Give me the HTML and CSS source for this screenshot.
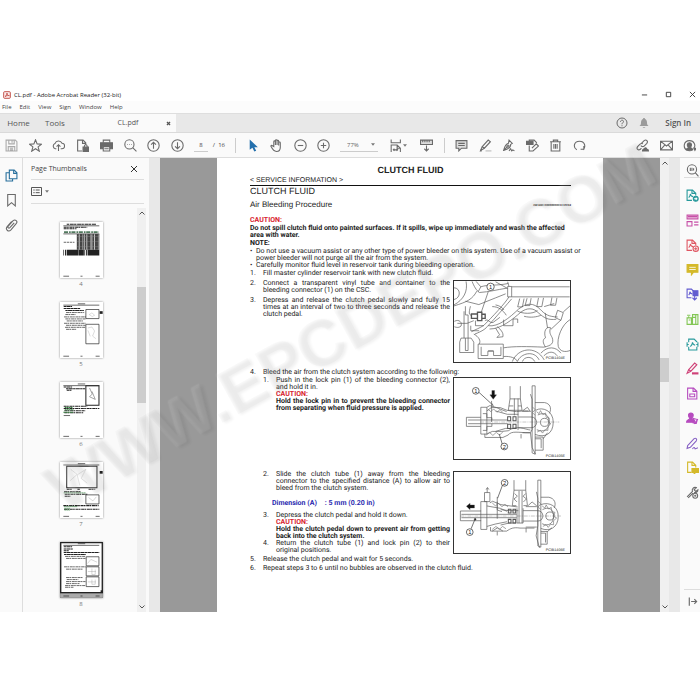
FILE: index.html
```html
<!DOCTYPE html>
<html lang="en">
<head>
<meta charset="utf-8">
<title>CL.pdf - Adobe Acrobat Reader (32-bit)</title>
<link rel="stylesheet" href="styles.css">
</head>
<body>
<div class="window">
  <header class="titlebar">
    <svg class="app-icon" viewBox="0 0 24 24"><rect x="2" y="2" width="20" height="20" rx="3" fill="#fbeaea" stroke="#b8372f" stroke-width="2.5"/><path d="M6 17c3-2 6-7 6-11 0 5 3 8 7 8-4-1-9 0-13 3z" fill="none" stroke="#b8372f" stroke-width="2"/></svg>
    <span class="title">CL.pdf - Adobe Acrobat Reader (32-bit)</span>
    <div class="window-controls">
      <button aria-label="Minimize"><svg viewBox="0 0 8 8"><path d="M1 4.500h6"/></svg></button>
      <button aria-label="Maximize"><svg viewBox="0 0 8 8"><path d="M1.500 1.500h5v5h-5z"/></svg></button>
      <button aria-label="Close"><svg viewBox="0 0 8 8"><path d="M1 1l6 6M7 1l-6 6"/></svg></button>
    </div>
  </header>
  <nav class="menubar">
    <button>File</button><button>Edit</button><button>View</button><button>Sign</button><button>Window</button><button>Help</button>
  </nav>
  <div class="tabs">
    <button class="tab home">Home</button>
    <button class="tab tools">Tools</button>
    <div class="tab-active"><span>CL.pdf</span><button aria-label="Close tab"><svg viewBox="0 0 8 8"><path d="M1.500 1.500l5 5M6.500 1.500l-5 5"/></svg></button></div>
    <div class="account">
      <button aria-label="Help"><svg class="icon" viewBox="0 0 24 24"><circle cx="12" cy="12" r="10"/><path d="M9 9.500c0-4 6-4 6-.5 0 2.500-3 2.500-3 5.500M12 16.500v2"/></svg></button>
      <button aria-label="Notifications"><svg class="icon bell" viewBox="0 0 24 24"><path d="M12 2c1.500 0 2 1 2 2 3 1 4 4 4 7 0 4 1 5 3 7H3c2-2 3-3 3-7 0-3 1-6 4-7 0-1 .5-2 2-2zM9 20h6l-3 2z"/></svg></button>
      <button class="signin">Sign In</button>
    </div>
  </div>
  <div class="toolbar">
    <div class="group file-tools">
      <button aria-label="Save" class="dim"><svg class="icon" viewBox="0 0 24 24"><path d="M2 2h17l3 3v17H2zM7 2v7h10V2M13 3v4M6 22v-8h12v8M9 17h6M9 20h6"/></svg></button>
      <button aria-label="Star"><svg class="icon" viewBox="0 0 24 24"><path d="M12 1.500l3 7.500 8 .5-6.200 5 2.200 8L12 18l-7 4.500 2.200-8L1 9.500 9 9z"/></svg></button>
      <button aria-label="Upload"><svg class="icon" viewBox="0 0 24 24"><path d="M8 18H6a5 5 0 0 1-.5-9.500 7 7 0 0 1 13-.5A5 5 0 0 1 18 18h-2M12 22V11M8.500 14l3.500-3.500 3.500 3.500"/></svg></button>
      <button aria-label="Protect"><svg class="icon" viewBox="0 0 24 24"><path d="M11 22H3V2h10l5 5v4M12 2v6h6"/><path class="solid" d="M13 15h10v8H13z"/><path d="M15.500 15v-2a2.500 2.500 0 0 1 5 0v2"/></svg></button>
      <button aria-label="Print"><svg class="icon" viewBox="0 0 24 24"><path d="M6 7V2h12v5"/><path class="solid" d="M1 7h22v11h-4v-5H5v5H1z"/><path d="M6 14h12v8H6zM8 18h8"/></svg></button>
      <button aria-label="Find"><svg class="icon" viewBox="0 0 24 24"><circle cx="10" cy="10" r="8.500"/><path d="M16 16l7 7M6 10h1M9.500 10h1M13 10h1"/></svg></button>
      <button aria-label="Previous page"><svg class="icon" viewBox="0 0 24 24"><circle cx="12" cy="12" r="10.500"/><path d="M12 18V6M7.500 10.500L12 6l4.500 4.500"/></svg></button>
      <button aria-label="Next page"><svg class="icon" viewBox="0 0 24 24"><circle cx="12" cy="12" r="10.500"/><path d="M12 6v12M7.500 13.500L12 18l4.500-4.500"/></svg></button>
    </div>
    <div class="group pager"><input aria-label="Page number" value="8"><span>/&nbsp; 16</span></div>
    <div class="group view-tools">
      <button aria-label="Select"><svg class="icon" viewBox="0 0 24 24"><path d="M5 1v19l5-4 3.500 7 3.500-1.500L13.500 15H20z" fill="#2470ad" stroke="none"/></svg></button>
      <button aria-label="Pan"><svg class="icon" viewBox="0 0 24 24"><path d="M7 14V5c0-2 3-2 3 0v6-8c0-2 3-2 3 0v8-7c0-2 3-2 3 0v8-5c0-2 3-2 3 0v8c0 5-3 8-7 8-5 0-7-3-10-9-1-2 1-3 2.500-1.500z"/></svg></button>
      <button aria-label="Zoom out"><svg class="icon" viewBox="0 0 24 24"><circle cx="12" cy="12" r="10.500"/><path d="M7 12h10"/></svg></button>
      <button aria-label="Zoom in"><svg class="icon" viewBox="0 0 24 24"><circle cx="12" cy="12" r="10.500"/><path d="M7 12h10M12 7v10"/></svg></button>
    </div>
    <div class="group zoom"><select aria-label="Zoom level"><option>77%</option></select><svg class="caret" viewBox="0 0 6 4"><path d="M0 0h6L3 4z"/></svg></div>
    <div class="group fit">
      <button aria-label="Fit page" class="wide"><svg class="icon" viewBox="0 0 24 24"><path d="M4 1v6h17V1M4 24V11h11l6 6v7M15 11v6h6M8 20h8M10 18l-2 2 2 2M14 18l2 2-2 2"/></svg><svg class="caret" viewBox="0 0 6 4"><path d="M0 0h6L3 4z"/></svg></button>
      <button aria-label="Scroll mode"><svg class="icon" viewBox="0 0 24 24"><path d="M1 2h22v8H1z" fill="#ddd"/><path d="M5 2v4M9 2v4M13 2v4M17 2v4M12 12v10M8 18l4 4 4-4"/></svg></button>
    </div>
    <div class="group edit-tools">
      <button aria-label="Comment"><svg class="icon" viewBox="0 0 24 24"><path d="M2 3h20v14H12l-5 5v-5H2z" fill="#ddd"/><path d="M6 8h12M6 12h12"/></svg></button>
      <button aria-label="Highlight"><svg class="icon" viewBox="0 0 24 24"><path d="M6 14L17 2l4 3-11 12zM6 14l-3 7 7-4M2 22h3"/><path d="M12 22h11" stroke="#bbb"/></svg></button>
      <button aria-label="Sign"><svg class="icon" viewBox="0 0 24 24"><path d="M13 2l6 6-3 2c0 6-5 9-13 11 2-8 4-12 9-13zM3 21l7-7"/><circle cx="11" cy="13" r="2"/><path d="M13 22l3-4 2 4 2-2 3 2"/></svg></button>
      <button aria-label="Edit"><svg class="icon" viewBox="0 0 24 24"><path d="M6 12v10h7l10-9-4-4-8 8M6 5V2h9l5 5"/><path class="solid" d="M1 4h12v6H1z"/></svg></button>
      <button aria-label="Delete"><svg class="icon" viewBox="0 0 24 24"><path d="M2 5h20M8 5V2h8v3M4 5v17h16V5M9 9v9M12 9v9M15 9v9"/></svg></button>
      <button aria-label="Rotate"><svg class="icon" viewBox="0 0 24 24"><path d="M7 20C0 16 1 4 12 4c10 0 12 10 7 16M14 19h6v-6"/></svg></button>
    </div>
    <div class="group share-tools">
      <button aria-label="Share link"><svg class="icon" viewBox="0 0 24 24"><path d="M10 8l5-5c4-3 8 1 5 5l-5 5c-2 2-5 1-6-1M13 9c-2-1-4-1-6 1l-4 4c-3 4 1 8 5 5l2-2"/><path class="solid" d="M12 22c0-4 3-3 4-5 3-2 4 1 4 2 3 0 3 1 3 3z"/></svg></button>
      <button aria-label="Mail"><svg class="icon" viewBox="0 0 24 24"><path d="M1 4h22v16H1zM1 4l11 9L23 4M1 20l8-9M23 20l-8-9"/></svg></button>
      <button aria-label="Account"><svg class="icon" viewBox="0 0 24 24"><path d="M8 21C-1 17 1 3 12 3c9 0 12 9 8 14" /><path class="solid" d="M12 7c5 0 4 6 2 8 0 2 4 2 4 5-3 2-8 2-12 0 0-3 4-3 4-5-3-2-3-8 2-8zM20 17h4l-2 4z"/></svg></button>
    </div>
  </div>

  <main class="workspace">
    <nav class="rail">
      <button aria-label="Page thumbnails"><svg class="icon blue" viewBox="0 0 24 24"><path d="M8 2h9l5 5v11H8zM16 2v6h6M8 7H2v15h12v-4"/></svg></button>
      <button aria-label="Bookmarks"><svg class="icon" viewBox="0 0 24 24"><path d="M5 1h14v21l-7-6-7 6z"/></svg></button>
      <button aria-label="Attachments"><svg class="icon" viewBox="0 0 24 24"><path d="M17 7l-8 9c-2 2-5 0-3-3l9-10c4-3 9 1 6 5L11 20c-5 5-11-1-7-6l8-9"/></svg></button>
    </nav>
    <aside class="panel">
      <div class="panel-head"><h2>Page Thumbnails</h2><button aria-label="Close panel"><svg viewBox="0 0 8 8"><path d="M1 1l6 6M7 1l-6 6"/></svg></button></div>
      <div class="panel-options"><button aria-label="Options"><svg class="list" viewBox="0 0 33 27"><path d="M1.500 1.500h30v24h-30zM7 9h4M14 9h12M7 17h4M14 17h12"/></svg><svg class="caret" viewBox="0 0 6 4"><path d="M0 0h6L3 4z"/></svg></button></div>
      <div class="panel-body">
        <div class="thumbs">
          <button class="thumb"><svg viewBox="180 197 128 166"><g stroke="#222" fill="none"><path d="M200 203h88" stroke-width="3" stroke-dasharray="7 2 12 1"/><path d="M190 208h107M190 232h107" stroke-width="2"/><path d="M191 212h70M191 217h38" stroke-width="3" stroke-dasharray="9 1 5 2"/><path d="M192 227h104" stroke="#527a5f" stroke-width="5" stroke-dasharray="12 3 5 2"/><path d="M191 257h32" stroke-width="2" stroke-dasharray="7 2"/><path d="M230 256h67" stroke-width="47" stroke="#444" stroke-dasharray="6 2 9 1 3 2"/><path d="M230 240h67M230 255h67M230 270h67" stroke="#999" stroke-width="1"/><path d="M190 288h107" stroke-width="17" stroke-dasharray="2 3 3 2 28 0 7 1 15 1"/><path d="M190 358h17M241 358h6M286 358h12" stroke-width="2"/></g></svg><span>4</span></button>
          <button class="thumb"><svg viewBox="180 438 128 166"><g stroke="#222" fill="none"><path d="M233 443h22M190 447h107" stroke-width="2"/><path d="M191 451h25M191 457h50M196 463h55" stroke-width="3" stroke-dasharray="7 1 12 1"/><path d="M198 469h54M196 475h30M192 482h65M196 488h60M200 494h48M192 501h64M198 507h58M195 513h60M198 519h30" stroke-width="2" stroke-dasharray="9 1 5 2"/><path d="M257 460h39v27h-39zM257 504h39v58h-39z" stroke-width="2"/><path d="M267 475l8-5 8 7-7 4zM263 515l12-3 8 12-6 15 10 8M270 540l-7-18" stroke="#999"/><path d="M298 469h9" stroke-width="8"/><path d="M190 599h17M241 599h6M286 599h12" stroke-width="2"/></g></svg><span>5</span></button>
          <button class="thumb"><svg viewBox="180 5 128 165"><g stroke="#222" fill="none"><path d="M233 10h22M190 15h107" stroke-width="2"/><path d="M191 19h25M198 24h57M200 29h14" stroke-width="3" stroke-dasharray="7 1 12 1"/><path d="M257 15h39v58h-39z" stroke-width="3"/><path d="M268 22l8 18-8 8 17 8-10-24" stroke="#777" stroke-width="2"/><path d="M191 76h70M191 83h106M193 90h62M193 96h56" stroke-width="3" stroke-dasharray="9 1 5 2"/><path d="M194 80h24M194 87h26M190 94h30" stroke="#398543" stroke-width="3" stroke-dasharray="5 1"/><path d="M191 104h19M190 166h17M241 166h6M286 166h12" stroke-width="2"/></g></svg><span>6</span></button>
          <button class="thumb"><svg viewBox="180 246 128 165"><g stroke="#222" fill="none"><path d="M233 250h22M190 254h107" stroke-width="2"/><path d="M200 258h90v64h-90z" stroke-width="3"/><path d="M212 267l20 16 25-16-14 27 18 14M231 283l8 32M210 301l20-18" stroke="#aaa"/><path d="M298 276h9" stroke-width="8"/><path d="M200 326h16M232 326h7M265 326h20M192 334h51M194 341h69M194 347h18M190 375h105M192 386h105" stroke-width="3" stroke-dasharray="9 1 5 2"/><path d="M257 343h39v27h-39z" stroke-width="2"/><path d="M265 351l13 10 10-12" stroke="#888"/><path d="M191 337h65M192 378h39M193 383h18M193 388h18" stroke="#398543" stroke-width="2" stroke-dasharray="5 1"/><path d="M190 407h17M241 407h6M286 407h12" stroke-width="2"/></g></svg><span>7</span></button>
          <button class="thumb"><svg viewBox="180 486 128 167"><path d="M180 638h128v15H180z" fill="#aaa"/><g stroke="#222" fill="none"><path d="M182 488h124v149H182z" stroke-width="4"/><path d="M233 491h22M190 496h107" stroke-width="2"/><path d="M191 500h25M191 507h27M191 512h15M191 517h106M192 523h65" stroke-width="3" stroke-dasharray="7 1 12 1"/><path d="M195 529h60M198 535h58M192 560h65M198 567h50M198 592h50M200 598h35M198 604h58M198 610h40M195 616h61M195 621h25" stroke-width="2" stroke-dasharray="9 1 5 2"/><path d="M258 530h38v27h-38zM258 560h38v27h-38zM258 590h38v29h-38z" stroke-width="2"/><path d="M262 550l10-12 18 8M263 574h24M275 565v18h10v-15M263 605h24M275 598v14h10v-14" stroke="#888"/><path d="M301 634h8" stroke-width="8"/><path d="M190 647h17M241 647h6M286 647h12" stroke-width="2"/></g></svg><span>8</span></button>
        </div>
        <div class="scrollbar"><svg viewBox="0 0 8 6"><path d="M1.500 4.500L4 2l2.500 2.500"/></svg><i class="handle"></i><svg viewBox="0 0 8 6"><path d="M1.500 1.500L4 4l2.500-2.500"/></svg></div>
      </div>
    </aside>
    <div class="splitter"></div>
    <section class="viewer">
      <article class="page">
        <div class="running">CLUTCH FLUID</div>
        <div class="section">&lt; SERVICE INFORMATION &gt;</div>
        <h1>CLUTCH FLUID</h1>
        <div class="subhead"><h2>Air Bleeding Procedure</h2><span>INFOID:0000000001172013</span></div>
        <div class="notice">
          <h3 class="caution">CAUTION:</h3>
          <p class="strong">Do not spill clutch fluid onto painted surfaces. If it spills, wipe up immediately and wash the affected<br>area with water.</p>
          <h3>NOTE:</h3>
          <ul>
            <li>Do not use a vacuum assist or any other type of power bleeder on this system. Use of a vacuum assist or<br>power bleeder will not purge all the air from the system.</li>
            <li>Carefully monitor fluid level in reservoir tank during bleeding operation.</li>
          </ul>
        </div>
        <div class="step"><b>1.</b><p>Fill master cylinder reservoir tank with new clutch fluid.</p></div>
        <div class="row">
          <div class="col">
            <div class="step"><b>2.</b><p>Connect a transparent vinyl tube and container to the bleeding connector (1) on the CSC.</p></div>
            <div class="step"><b>3.</b><p>Depress and release the clutch pedal slowly and fully 15 times at an interval of two to three seconds and release the clutch pedal.</p></div>
          </div>
          <svg class="figure" viewBox="26 20 346 241">
            <g fill="none" stroke="#555" stroke-width="2">
              <path d="M62 21c6 30-8 55-36 70M80 21c5 13 13 28 22 33 30-2 50-8 82-13M92 21l14 16c25-8 45-2 82-10M106 37l-8 15"/>
              <path d="M186 36h12v31h-12zM198 37h173M198 67h173M186 22l4 14M150 22l36 20M26 94c40-12 55-20 68-44M60 80l40 10 50-20 30-12"/>
              <path d="M190 67c-12 20-50 60-75 85-15 10-25 12-37 19M198 73c-30 35-60 70-80 90-12 8-20 11-30 15"/>
              <path d="M128 153c30 5 65-25 90-49 25-20 45-20 65 0 15 16 25 22 52 23M132 163c35 0 70-30 93-50 18-14 38-14 52 1 20 18 30 22 54 20" />
              <path d="M222 72l-6 25h14l5-25M244 71l-6 22h14l4-22M278 70l-5 26h15l5-26M318 69l-4 23h15l4-22M335 107l17 7-7 23-17-8zM352 112l20-18M345 136l-30 28M325 87l-30 9"/>
              <path d="M60 95v26h8v69M56 110v80M47 190h30l8 12v31H43v-31zM68 190v37h-8v-37M75 95c-5 20-5 25 4 28"/>
              <path d="M78 118h18v13H78zM96 113h13v25H96zM109 119h10v12h-10z" stroke-width="4"/><path d="M128 52l-21 62"/>
              <path d="M85 138l-20 8h-29M27 140c15-8 24 4 20 14-8 8-20 2-20 2M90 138v15h25M76 153v15h25M118 138c10-8 15 10 25 5l20-15M140 96c18 0 32 10 42 26M150 91c12 2 20 8 25 15"/>
              <path d="M174 135v18h28v-20h14v12M215 109c15 9 45 10 60-1M235 125c20 5 38 2 50-3M150 160l12 20-8 8 18-2c2-15-8-20-16-31"/>
              <path d="M98 208h75v43H98zM107 216v26h20v-13h17v13h22v-26M128 228h16"/>
              <path d="M174 219c30-5 70-4 120-2 24-5 30-12 25-28-5-10-10-15-5-30-12-5-22 10-15 30-10 5-8 16 0 28M174 245c20-2 38 5 40 14M200 260c15-40 70-50 95-5M215 260c10-25 50-35 65-5M230 260c5-15 28-18 37 0M285 235c20-22 45-20 60 0M294 243c15-15 30-14 40 0"/>
              <path d="M298 115l7 45M372 135c-25 15-40 55-35 80 5 15 20 18 35 12M26 40c20 0 22 30 0 35M85 178c15 8 22 20 16 30" />
            </g>
            <circle cx="135" cy="37" r="11" fill="#fff" stroke="#222" stroke-width="2"/><text x="135" y="43" class="num">1</text>
            <text x="357" y="253" class="code">PCIB1404E</text>
          </svg>
        </div>
        <div class="step four"><b>4.</b><p>Bleed the air from the clutch system according to the following:</p></div>
        <div class="row">
          <div class="col sub">
            <div class="step"><b>1.</b><div><p>Push in the lock pin (1) of the bleeding connector (2), and hold it in.</p><h3 class="caution">CAUTION:</h3><p class="strong">Hold the lock pin in to prevent the bleeding connector from separating when fluid pressure is applied.</p></div></div>
          </div>
          <svg class="figure" viewBox="26 22 346 241">
            <g fill="none" stroke="#555" stroke-width="2">
              <path d="M63 139h43M63 166h43M63 139v27M68 147h118M68 158h118M106 109v80h18V109zM124 120l13-10h27l20 8 28 4 20-2h16M124 189l16-8h28l20-2c25-18 50-4 66-2"/>
              <path d="M118 188v11h54l15-7c12-14 30-7 66-7M124 109l9-5 20 6 30 12M112 128h12v12h15v8M112 178h12v-12h15v-8M138 90v63M150 120l35 10h33M150 181l30-9h32"/>
              <path d="M186 137h9v12h-9zM202 137h9v12h-9zM186 160h9v12h-9zM202 160h9v12h-9z" stroke-width="3"/>
              <path d="M217 83v94M206 83v50M193 46v38l-5 34h41l-5-34V46M193 84h31M190 105h13M217 105h10M230 120l15-11 9 13"/>
              <path d="M259 45v200l9 4V45zM254 70l5 15v90l-5 10 5 44 10 20M268 95h28c16 3 22 15 15 32M270 118c20-12 52 2 52 35 0 36-25 48-54 37M276 132c20-10 32 0 35 20-1 24-18 33-38 24M218 138h38c22 0 22 32 0 32h-38M230 121h24M230 185h24M226 189v13"/>
              <path d="M268 198h24v39h-24M268 203h18v28M292 203l13-18" />
              <path d="M104 153h236" stroke-width="1" stroke-dasharray="12 3 3 3"/><circle cx="296" cy="154" r="12"/>
            </g>
            <path d="M126 114l10 8 8-8 10 10 9-8 8 8M122 192l10-8 10 9 10-9 10 8 10-10M260 108l8 8-8 9 8 8M272 122l8 6 4-9 7 12 8-5 2 13 9 2-3 12 8 5-9 8 0 12-9-1-7 9-6-8-10 5" fill="none" stroke="#777" stroke-width="2"/>
            <path d="M139 59h8v13h6l-10 13-10-13h6z" fill="#111"/>
            <path d="M100 64l38 35M170 219l-9-30M140 98l3 8" fill="none" stroke="#333" stroke-width="2"/>
            <g fill="#fff" stroke="#222" stroke-width="2"><circle cx="91" cy="60" r="10"/><circle cx="176" cy="226" r="10"/></g><text x="91" y="66" class="num">1</text><text x="176" y="232" class="num">2</text>
            <text x="357" y="257" class="code">PCIB1405E</text>
          </svg>
        </div>
        <div class="row last">
          <div class="col sub">
            <div class="step"><b>2.</b><p>Slide the clutch tube (1) away from the bleeding connector to the specified distance (A) to allow air to bleed from the clutch system.</p></div>
            <div class="dimension"><span>Dimension (A)</span><span>: 5 mm (0.20 in)</span></div>
            <div class="step"><b>3.</b><div><p>Depress the clutch pedal and hold it down.</p><h3 class="caution">CAUTION:</h3><p class="strong">Hold the clutch pedal down to prevent air from getting back into the clutch system.</p></div></div>
            <div class="step tight"><b>4.</b><p>Return the clutch tube (1) and lock pin (2) to their original positions.</p></div>
          </div>
          <svg class="figure" viewBox="26 16 346 241">
            <g fill="none" stroke="#555" stroke-width="2">
              <path d="M45 132h62M45 161h62M45 132v29M48 142h165M48 152h165M106 104v83h18V104zM117 77h16v27h-16zM125 63v14M122 68l4-6 4 6M133 108l8-5 25 10 50 7M124 117l40 7 20 9M124 178l25-7 35-7"/>
              <path d="M135 180v12h48c12-8 20-12 40-9h43M140 192l16-10 16 10M155 90v65M155 104v25l14 5M155 193v12M165 128l25 3h28M165 174l25-6h22"/>
              <path d="M188 127h8v11h-8zM202 127h8v11h-8zM188 157h8v11h-8zM202 157h8v11h-8z" stroke-width="3"/>
              <path d="M220 72v96M229 72v96M214 124v44h18v-44M205 40v30l-5 46h12M240 40v30l5 46h-12M205 70h35M207 80l8 8-10 8 9 9M240 80l-8 8 10 8-9 9M247 116l12-11 14 12"/>
              <path d="M276 40v196l9 4V40zM272 75l4 19v82l-5 30 10 36M285 91h24c18 4 22 18 16 32M285 113c26-10 52 6 52 35 0 33-26 47-52 36M290 128c18-10 33-2 33 20s-17 31-34 22M232 131h44c20 0 20 31 0 31h-44M240 119h33M240 180h33M241 183v13M285 193h19v38h-19M285 198h14v28M304 194l14-12"/>
              <path d="M45 147h300" stroke-width="1" stroke-dasharray="12 3 3 3"/><circle cx="312" cy="147" r="12"/>
            </g>
            <path d="M140 108l10 9 8-8 11 10 9-7 9 8M140 187l11-9 10 9 10-9 10 7M277 103l8 8-8 9 8 8M289 117l8 6 4-9 7 12 8-5 2 13 9 2-3 12 8 5-9 8 0 12-9-1-7 9-6-8-10 5" fill="none" stroke="#777" stroke-width="2"/>
            <path d="M63 118l11-9v5h13v9H74v5z" fill="#111"/>
            <path d="M171 54l-15 40M77 185l11-27" fill="none" stroke="#333" stroke-width="2"/><circle cx="89" cy="157" r="3" fill="#222"/>
            <g fill="#fff" stroke="#222" stroke-width="2"><circle cx="177" cy="48" r="10"/><circle cx="73" cy="195" r="10"/></g><text x="177" y="54" class="num">2</text><text x="73" y="201" class="num">1</text>
            <text x="357" y="252" class="code">PCIB1406E</text>
          </svg>
        </div>
        <div class="step final"><b>5.</b><p>Release the clutch pedal and wait for 5 seconds.</p></div>
        <div class="step final"><b>6.</b><p>Repeat steps 3 to 6 until no bubbles are observed in the clutch fluid.</p></div>
      </article>
    </section>
    <div class="scrollbar doc-scroll"><svg viewBox="0 0 8 6"><path d="M1.500 4.500L4 2l2.500 2.500"/></svg><i class="handle"></i><svg viewBox="0 0 8 6"><path d="M1.500 1.500L4 4l2.500-2.500"/></svg></div>
    <div class="splitter"></div>
    <nav class="tool-rail">
      <button class="search" aria-label="Search tools"><svg class="icon" viewBox="0 0 24 24"><circle cx="11" cy="10" r="8.500"/><path d="M17 16l6 7M8 7v6M11 7v6M14 8v4"/></svg></button>
      <div class="tool-list">
        <button aria-label="Export PDF"><svg class="icon teal" viewBox="0 0 24 24"><path d="M11 21H2V2h10l6 6v4M11 2v6h7M5 16c3-3 3-6 3-7 1 4 3 5 5 5"/><circle class="solid" cx="18" cy="18" r="4.500"/><path d="M15 18h5M18 16l2 2-2 2" stroke="#fff"/></svg></button>
        <button aria-label="Organize"><svg class="icon pink" viewBox="0 0 24 24"><path d="M2 2h20v7H2zM2 14h9v8H2zM15 15h8M15 20h8"/><path d="M3 5h18" stroke-width="3"/></svg></button>
        <button aria-label="Create PDF"><svg class="icon red" viewBox="0 0 24 24"><path d="M11 21H2V2h10l6 6v4M11 2v6h7M5 16c3-3 3-6 3-7 1 4 3 5 5 5"/><circle cx="18" cy="18" r="5"/><path d="M15 18h6M18 15v6"/></svg></button>
        <button aria-label="Comment"><svg class="icon yellow" viewBox="0 0 24 24"><path class="solid" d="M2 3h20v14h-8l-4 5v-5H2z"/><path d="M6 8h12M6 12h12" stroke="#fff" stroke-width="1.500"/></svg></button>
        <button aria-label="Combine"><svg class="icon indigo" viewBox="0 0 24 24"><path d="M10 18H2V2h8l4 4M5 13c3-3 2-5 2-6 1 3 3 4 5 4"/><path class="solid" d="M13 5h9v9h-9z"/><path d="M16 11v11M12 18l4 4 4-4"/></svg></button>
        <button aria-label="Compare"><svg class="icon green" viewBox="0 0 24 24"><path d="M2 9h8v12H2zM2 4h6M12 3h10v18H12zM18 3v18M12 8h6M5 6v3M5 13h3"/></svg></button>
        <button aria-label="Compress"><svg class="icon teal" viewBox="0 0 24 24"><path d="M5 8V2h10l5 5v1M5 16v6h15v-6M2 8v8M22 8v8M2 12h3M19 12h3M8 16c4-3 4-6 4-8 1 4 3 5 5 5"/></svg></button>
        <button aria-label="Redact"><svg class="icon crimson" viewBox="0 0 24 24"><path d="M5 14L16 2l4 3L9 17zM5 14l-3 7 7-4"/><path d="M11 21h12" stroke-width="4"/></svg></button>
        <button aria-label="Prepare form"><svg class="icon violet" viewBox="0 0 24 24"><path d="M3 2h11l6 6v14H3zM13 2v6h7M7 13h9v5H7z"/></svg></button>
        <button aria-label="Request signatures"><svg class="icon violet" viewBox="0 0 24 24"><path class="solid" d="M9 2c6 0 5 7 2 9 0 3 4 2 5 5v3H1c0-5 6-4 6-8-3-2-4-9 2-9z"/><path d="M14 12l7 2-2 7-6-1zM15 22l7-9"/></svg></button>
        <button aria-label="Fill and sign"><svg class="icon purple" viewBox="0 0 24 24"><path d="M3 16L15 3c3-2 6 1 4 4L8 19l-6 2zM12 22c3-5 4-2 5 0l5-2"/></svg></button>
        <button aria-label="Send comments"><svg class="icon yellow" viewBox="0 0 24 24"><path d="M10 21H3V2h9l6 6v4M11 2v6h7"/><path class="solid" d="M11 14h12v7h-5l-3 3v-3h-4z"/></svg></button>
        <button aria-label="More tools"><svg class="icon" viewBox="0 0 24 24"><path d="M2 20L12 10C10 6 14 1 19 3l-4 4 3 3 4-3c0 4-3 6-7 5" /><path d="M4 22L13 13"/><circle cx="17" cy="18" r="4.500" fill="#fafafa"/><path d="M15 18h4M17 16v4"/></svg></button>
      </div>
      <button class="expand" aria-label="Expand"><svg class="icon" viewBox="0 0 24 24"><path d="M5 3v18M9 12h12M16 7l5 5-5 5" stroke-width="2.500"/></svg></button>
    </nav>
  </main>
</div>
<div class="watermark" aria-hidden="true"><span>WWW.EPCDEPO.COM</span></div>
</body>
</html>
```
FILE: styles.css
```css
* { box-sizing: border-box; }
body { margin: 0; background: #fff; font-family: "Open Sans", "Noto Sans", sans-serif; font-size: 6px; line-height: 8px; color: #444; overflow-x: hidden; }
h1, h2, h3, p, ul { margin: 0; padding: 0; font-size: inherit; }
button { padding: 0; border: 0; background: none; color: inherit; font: inherit; display: flex; align-items: center; justify-content: center; }
svg { display: block; fill: none; stroke: #555; }
.icon { width: 13px; height: 13px; stroke: #6a6a6a; stroke-width: 2; color: #6a6a6a; }
.icon .solid { fill: currentColor; }
.caret { width: 4px; height: 3px; fill: #777; stroke: none; }
.window { min-height: 100vh; padding: 88px 0; display: flex; flex-direction: column; }

.titlebar { height: 13px; display: flex; align-items: center; padding-left: 3px; color: #222; }
.app-icon { width: 8px; height: 8px; margin-right: 3px; }
.window-controls { margin-left: auto; display: flex; gap: 17px; padding-right: 4px; }
.window-controls svg, .panel-head button svg { width: 8px; height: 8px; stroke: #333; }
.window-controls svg { width: 7px; height: 7px; }
.menubar { height: 12px; display: flex; gap: 8px; padding-left: 2px; background: #fcfcfc; }

.tabs { height: 20px; display: flex; background: #e8e8e8; border-top: 1px solid #dedede; border-bottom: 1px solid #dadada; font-size: 8px; color: #555; }
.home { width: 37px; }
.tools { width: 36px; margin-right: 7px; }
.tab-active { width: 96px; display: flex; align-items: center; background: #fafafa; font-size: 7px; }
.tab-active span { flex: 1; text-align: center; }
.tab-active button { width: 15px; margin-left: -15px; }
.tab-active svg { width: 5px; height: 5px; stroke-width: 2; }
.account { margin-left: auto; display: flex; align-items: center; gap: 10px; padding-right: 9px; }
.account .icon { width: 12px; height: 12px; }
.account .bell { fill: #9a9a9a; stroke: none; }
.signin { font-weight: 600; margin-left: 5px; }

.toolbar { height: 25px; display: flex; align-items: center; padding: 0 4px 0 5px; background: #fafafa; border-bottom: 1px solid #ddd; }
.group { display: flex; align-items: center; justify-content: space-between; }
.dim .icon { stroke: #aaa; }
.file-tools { width: 179px; }
.pager { width: 52px; height: 15px; padding: 0 10px; border-right: 1px solid #ccc; }
.pager input { width: 14px; height: 14px; padding: 0; border: 0; border-bottom: 1px solid #ccc; background: none; text-align: center; font: inherit; color: #444; }
.view-tools { width: 83px; margin-left: 11px; }
.zoom { width: 38px; height: 14px; margin-left: 10px; border-bottom: 1px solid #ccc; padding-right: 3px; }
.zoom select { appearance: none; border: 0; padding: 0 0 0 7px; background: none; font: inherit; color: #666; }
.fit { width: 56px; height: 15px; margin-left: 11px; padding-right: 11px; border-right: 1px solid #ccc; }
.wide { gap: 1px; }
.edit-tools { width: 131px; margin-left: 10px; }
.share-tools { width: 60px; margin-left: auto; }

.workspace { flex: 1; display: flex; align-items: stretch; }
.rail { width: 23px; display: flex; flex-direction: column; align-items: center; gap: 12px; padding-top: 11px; background: #fafafa; border-right: 1px solid #ddd; }
.rail .blue { stroke: #276f9c; }
.panel { width: 126px; display: flex; flex-direction: column; background: #fafafa; }
.panel-head { display: flex; justify-content: space-between; align-items: center; height: 22px; margin: 0 5px 0 8px; border-bottom: 1px solid #ddd; }
.panel-head h2 { font-size: 7px; font-weight: 400; }
.panel-head button { margin-right: 6px; }
.panel-options { height: 24px; margin: 0 5px 0 8px; border-bottom: 1px solid #ddd; display: flex; align-items: center; }
.panel-options button { gap: 3px; }
.list { width: 11px; height: 9px; stroke-width: 3; }
.panel-body { flex: 1; display: flex; padding: 4px 3px 0 0; }
.thumbs { flex: 1; display: flex; flex-direction: column; align-items: center; gap: 14px; padding: 14px 0 0 2px; }
.thumb { flex-direction: column; gap: 2px; color: #777; }
.thumb svg { width: 43px; height: 56px; background: #fff; box-shadow: 0 0 2px #888; }
.scrollbar { width: 9px; display: flex; flex-direction: column; align-items: center; background: #f0f0f0; padding: 2px 0; }
.scrollbar svg { width: 8px; height: 6px; stroke: #555; }
.handle { width: 100%; background: #cdcdcd; height: 29%; margin: 71px 0 auto; }
.splitter { width: 11px; background: #e8e8e8; }
.doc-scroll .handle { height: 24px; margin-top: 192px; }
.viewer { flex: 1; min-width: 0; background: #999; padding: 0 57px 0 57px; display: flex; }

.page { flex: 1; min-width: 0; background: #fff; padding: 6px 32px 0 33px; font-family: Roboto, "Liberation Sans", Arial, sans-serif; font-size: 7px; line-height: 7px; color: #222; text-rendering: geometricPrecision; }
.running, .section, .page h1, .subhead { font-family: "Liberation Sans", Arial, sans-serif; }
.running { text-align: center; font-size: 9px; line-height: 12px; font-weight: 700; }
.section { font-size: 7px; line-height: 9px; border-bottom: 1px solid #111; }
.page h1 { font-size: 9px; line-height: 11px; font-weight: 400; }
.subhead { display: flex; justify-content: space-between; align-items: center; padding: 3px 0 7px; }
.subhead h2 { font-size: 8px; line-height: 10px; font-weight: 400; }
.subhead span { font-size: 3px; font-weight: 700; font-style: italic; }
.notice { display: grid; gap: 1px; margin-bottom: 1px; white-space: nowrap; }
.strong { font-weight: 700; }
.caution { color: #d81f30; }
.notice ul { list-style: none; }
.notice li { padding-left: 6px; }
.notice li::before { content: "•"; float: left; margin-left: -6px; }
.step { display: grid; grid-template-columns: 13px 1fr; text-align: justify; }
.step b { font-weight: 400; }
.row { display: grid; grid-template-columns: 1fr 118px; gap: 3px; margin-top: 3px; }
.col { display: flex; flex-direction: column; gap: 3px; }
.sub { padding-left: 13px; gap: 0; }
.figure { width: 118px; height: 83px; border: 1px solid #333; }
.figure text { stroke: none; fill: #222; font-family: "Liberation Sans", sans-serif; }
.num { font-size: 17px; text-anchor: middle; }
.code { font-size: 11px; text-anchor: end; }
.four { margin-top: 6px; }
.four + .row { margin-top: 1px; }
.last { margin-top: 11px; }
.dimension { display: flex; gap: 8px; margin: 8px 0 5px 9px; color: #2a2ab0; font-weight: 700; }
.final { margin-top: 2px; }

.tool-rail { width: 20px; padding: 6px 0 5px 4px; background: #fafafa; display: flex; flex-direction: column; align-items: center; }
.search { height: 14px; width: 100%; border-bottom: 1px solid #ddd; }
.tool-list { flex: 0 0 70%; margin-top: 11px; display: flex; flex-direction: column; justify-content: space-between; }
.expand { margin-top: auto; width: 100%; padding-top: 6px; border-top: 1px solid #ddd; }
.expand .icon { width: 11px; height: 11px; }
.teal { stroke: #27999b; color: #27999b; }
.pink { stroke: #c750a7; color: #c750a7; }
.red { stroke: #df5662; color: #df5662; }
.yellow { stroke: #d4b92a; color: #d4b92a; }
.indigo { stroke: #625bd0; color: #625bd0; }
.green { stroke: #83c655; color: #83c655; }
.crimson { stroke: #cf4278; color: #cf4278; }
.violet { stroke: #b64bbf; color: #b64bbf; }
.purple { stroke: #8660c4; color: #8660c4; }

.watermark { position: absolute; inset: 0 0 auto; height: 652px; display: flex; align-items: center; justify-content: center; overflow: hidden; pointer-events: none; }
.watermark span { font: 700 65px/65px "Liberation Sans", Arial, sans-serif; white-space: nowrap; color: rgba(140, 140, 140, .04); text-shadow: 2px 2px 3px rgba(0, 0, 0, .06), -1px -1px 2px rgba(255, 255, 255, .12); transform: rotate(-29deg); }
```
